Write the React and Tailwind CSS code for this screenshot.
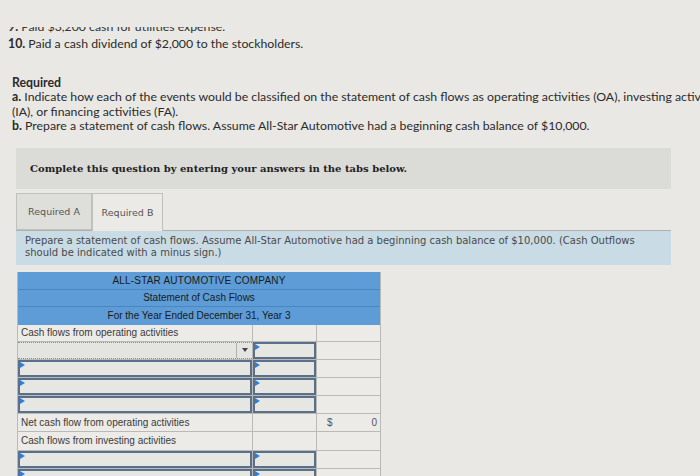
import React from "react";

const Tri = () => (
  <span className="absolute left-0 top-0 w-0 h-0 border-t-[3px] border-b-[3px] border-l-[5px] border-t-transparent border-b-transparent border-l-[#2f7fd6]" />
);

function InputCell({ tri = true }) {
  return (
    <div className="relative h-full border-2 border-[#5a6f8a] bg-[#e6e6e3]">
      {tri && <Tri />}
    </div>
  );
}

function Row({ c1, c2, c3, h = "h-[18px]" }) {
  return (
    <div className={`grid grid-cols-[235px_64px_64px] ${h} border-b border-[#b9b9b6]`}>
      <div className="border-r border-[#b9b9b6] overflow-hidden">{c1}</div>
      <div className="border-r border-[#b9b9b6] overflow-hidden">{c2}</div>
      <div className="overflow-hidden">{c3}</div>
    </div>
  );
}

const Label = ({ children }) => (
  <div className="h-full flex items-center pl-[3px] text-[10px] text-[#3a3a3a] font-['Liberation_Sans',sans-serif] whitespace-nowrap">
    {children}
  </div>
);

export default function App() {
  return (
    <div className="w-[700px] h-[476px] overflow-hidden bg-[#e9e8e4] text-[#2b2b2b] font-['Lato',sans-serif]">
      <div className="h-[27px]" />
      <div className="h-[7px] overflow-hidden pl-[8px]">
        <div className="-mt-[7px] text-[12.3px] leading-[14px] whitespace-nowrap text-[#333]">
          <b>9.</b> Paid $3,200 cash for utilities expense.
        </div>
      </div>
      <div className="pl-[8px] mt-[2px] text-[12.3px] leading-[15px] whitespace-nowrap">
        <b>10.</b> Paid a cash dividend of $2,000 to the stockholders.
      </div>

      <div className="mt-[25px] pl-[12px] text-[12.3px] leading-[14.3px] whitespace-nowrap overflow-hidden">
        <div className="font-bold">Required</div>
        <div>
          <b>a.</b> Indicate how each of the events would be classified on the statement of cash flows as operating activities (OA), investing activ
        </div>
        <div>(IA), or financing activities (FA).</div>
        <div>
          <b>b.</b> Prepare a statement of cash flows. Assume All-Star Automotive had a beginning cash balance of $10,000.
        </div>
      </div>

      <div className="ml-[16px] w-[655px] mt-[15px] h-[41px] bg-[#dbdbd7] flex items-center pl-[14px]">
        <span className="font-['DejaVu_Serif',serif] font-bold text-[10px] text-[#222] whitespace-nowrap">
          Complete this question by entering your answers in the tabs below.
        </span>
      </div>

      <div className="ml-[16px] w-[655px] mt-[5px]">
        <div className="flex h-[37px] border-b border-[#b0b0ad] items-end">
          <div className="w-[76px] h-[37px] border border-[#c0c0bd] bg-[#dededa] flex items-center justify-center text-[9.5px] text-[#555] font-['DejaVu_Sans',sans-serif]">
            Required A
          </div>
          <div className="w-[71px] h-[38px] -mb-px border border-b-0 border-[#c0c0bd] bg-[#ebeae6] flex items-center justify-center text-[9.5px] text-[#555] font-['DejaVu_Sans',sans-serif]">
            Required B
          </div>
        </div>
        <div className="h-[34px] bg-[#c9dbe4] pl-[9px] pt-[4px] text-[10px] leading-[12px] text-[#4a4a4a] font-['DejaVu_Sans',sans-serif]">
          <div className="whitespace-nowrap">
            Prepare a statement of cash flows. Assume All-Star Automotive had a beginning cash balance of $10,000. (Cash Outflows
          </div>
          <div className="whitespace-nowrap">should be indicated with a minus sign.)</div>
        </div>
      </div>

      <div className="ml-[17px] mt-[7px] w-[364px] border-l border-r border-[#b9b9b6] bg-[#ecebe7] font-['Liberation_Sans',sans-serif]">
        <div className="bg-[#5d9cd6] text-[10px] text-[#1a1a1a] text-center">
          <div className="h-[17.5px] flex items-center justify-center border-b border-[#4a86c0] tracking-[0.2px]">
            ALL-STAR AUTOMOTIVE COMPANY
          </div>
          <div className="h-[17.5px] flex items-center justify-center border-b border-[#4a86c0]">
            Statement of Cash Flows
          </div>
          <div className="h-[17.5px] flex items-center justify-center">
            For the Year Ended December 31, Year 3
          </div>
        </div>
        <Row h="h-[17px]" c1={<Label>Cash flows from operating activities</Label>} />
        <Row
          c1={
            <div className="h-full flex border-t border-b border-dotted border-[#8a8a8a] bg-[#e4e4e1]">
              <div className="flex-1" />
              <div className="w-[16px] border-l border-[#b0b0ad] flex items-center justify-center">
                <span className="w-0 h-0 border-l-[3px] border-r-[3px] border-t-[4px] border-l-transparent border-r-transparent border-t-[#444]" />
              </div>
            </div>
          }
          c2={<InputCell />}
        />
        <Row c1={<InputCell />} c2={<InputCell />} />
        <Row c1={<InputCell />} c2={<InputCell />} />
        <Row c1={<InputCell />} c2={<InputCell />} />
        <Row
          h="h-[18.5px]"
          c1={<Label>Net cash flow from operating activities</Label>}
          c3={
            <div className="h-full flex items-center justify-between px-[4px] text-[10px] text-[#555]">
              <span className="pl-[6px]">$</span>
              <span>0</span>
            </div>
          }
        />
        <Row h="h-[18.5px]" c1={<Label>Cash flows from investing activities</Label>} />
        <Row c1={<InputCell />} c2={<InputCell />} />
        <Row c1={<InputCell />} c2={<InputCell />} />
      </div>
    </div>
  );
}
